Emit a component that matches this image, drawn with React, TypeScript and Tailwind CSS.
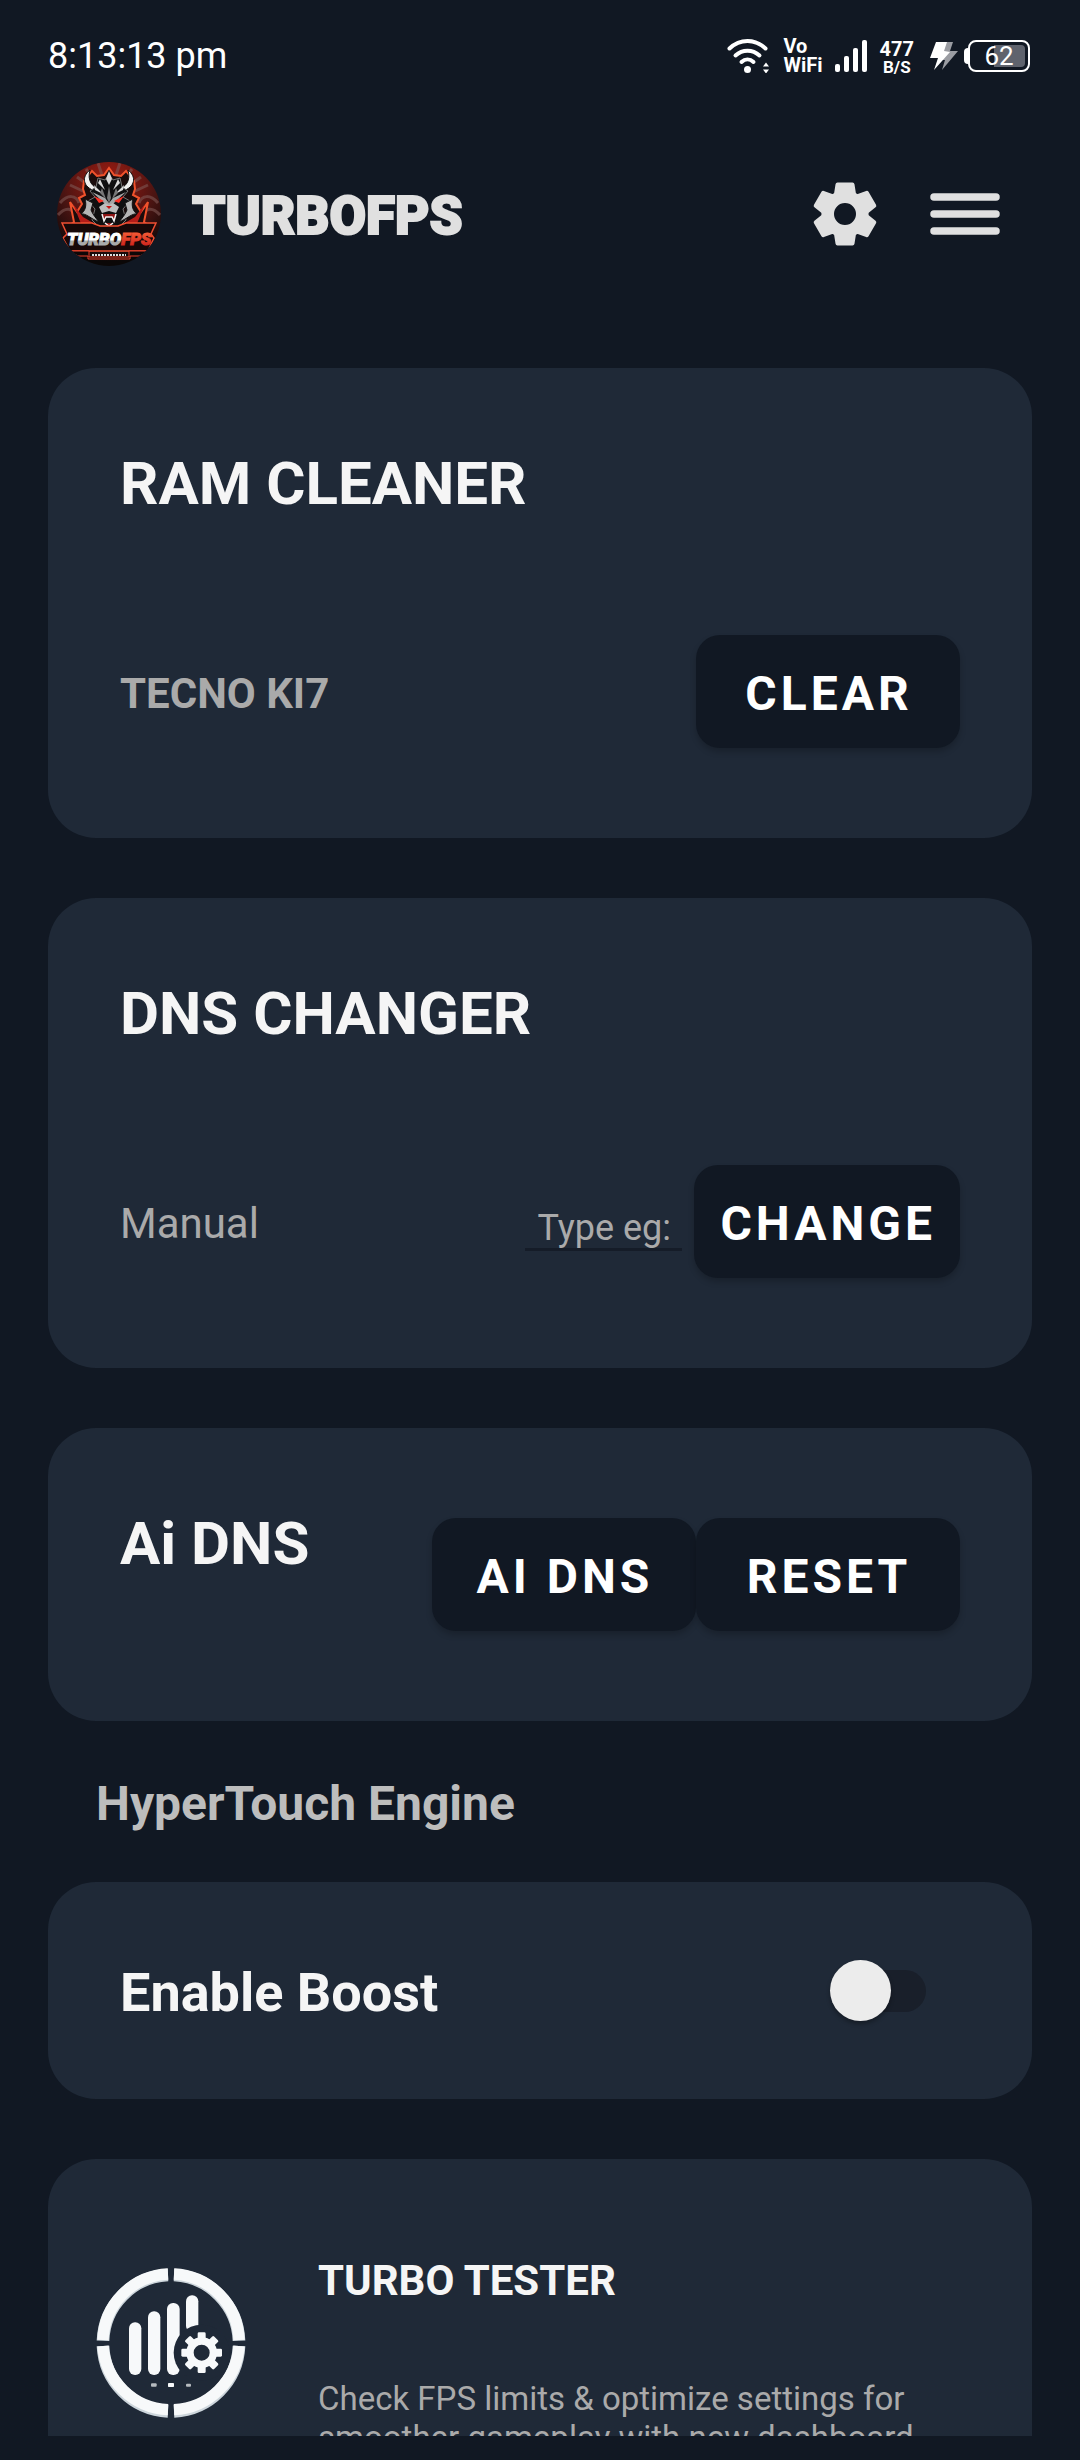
import { useState } from "react";
import type { ReactNode } from "react";

const gearTeeth = [0, 60, 120, 180, 240, 300];
const smallGearTeeth = [0, 45, 90, 135, 180, 225, 270, 315];

function WifiIcon() {
  return (
    <svg viewBox="0 0 43 34" className="h-[34px] w-[43px]" fill="none" stroke="#fff" strokeWidth="4" strokeLinecap="round">
      <path d="M2.500 9.500C13-.500 28-.500 38.500 9.500" />
      <path d="M8.500 16.500c7-6.500 17-6.500 24 0" />
      <path d="M14.500 23c3.500-3.200 8.500-3.200 12 0" />
      <circle cx="20.500" cy="30.500" r="3.500" fill="#fff" stroke="none" />
      <path d="M36 27.500l3-4 3 4zM36 30.500l3 4 3-4z" fill="#fff" stroke="none" />
    </svg>
  );
}

function SignalIcon() {
  return (
    <svg viewBox="0 0 33 33" className="h-[33px] w-[33px]" fill="#fff">
      <rect x="0" y="24" width="5" height="8" rx="2" />
      <rect x="9" y="16" width="5" height="16" rx="2" />
      <rect x="18" y="8" width="5" height="24" rx="2" />
      <rect x="27" y="0" width="5" height="32" rx="2" />
    </svg>
  );
}

function BoltIcon() {
  return (
    <svg viewBox="0 0 28 29" className="h-[29px] w-[28px]">
      <path d="M12 0h11l-3 9h8L12 28l3-10h-7z" fill="#9a9ca2" />
      <path d="M6 0h11l-3 9 6 1L4 28l4-12H0z" fill="#fff" />
    </svg>
  );
}

function StatusBar() {
  return (
    <div className="flex h-28 shrink-0 items-center justify-between pr-[50px] pl-12 text-white">
      <span className="text-[36px] leading-[42px]">8:13:13 pm</span>
      <div className="flex items-center">
        <WifiIcon />
        <div className="ml-[14px] text-[20px] leading-[19px] font-bold">
          <div>Vo</div>
          <div>WiFi</div>
        </div>
        <div className="ml-3">
          <SignalIcon />
        </div>
        <div className="ml-3 pt-1 text-center font-bold">
          <div className="text-[20px] leading-[19px]">477</div>
          <div className="text-[17px] leading-[17px]">B/S</div>
        </div>
        <div className="ml-4">
          <BoltIcon />
        </div>
        <div className="ml-[6px] flex items-center">
          <div className="h-4 w-1 rounded-l bg-white" />
          <div className="flex h-8 w-[62px] items-center rounded-lg border-2 border-white p-[3px]">
            <div className="h-full w-full rounded bg-linear-to-r from-transparent from-40% to-[#5f636d] to-40% text-center text-[26px] leading-[22px]">
              62
            </div>
          </div>
        </div>
      </div>
    </div>
  );
}

function Logo() {
  return (
    <svg viewBox="0 0 106 106" className="h-[106px] w-[106px]" role="img" aria-label="TurboFPS logo">
      <defs>
        <radialGradient id="logoBg" cx="50%" cy="20%" r="75%">
          <stop offset="0" stopColor="#a51c12" />
          <stop offset="0.600" stopColor="#4a1513" />
          <stop offset="1" stopColor="#0b0707" />
        </radialGradient>
        <linearGradient id="logoWhite" x1="0" y1="0" x2="0" y2="1">
          <stop offset="0.550" stopColor="#fff" />
          <stop offset="0.600" stopColor="#a9aaaa" />
        </linearGradient>
        <linearGradient id="logoRed" x1="0" y1="0" x2="0" y2="1">
          <stop offset="0" stopColor="#ff6a3c" />
          <stop offset="1" stopColor="#c51616" />
        </linearGradient>
        <clipPath id="logoClip">
          <circle cx="53" cy="53" r="52" />
        </clipPath>
      </defs>
      <g clipPath="url(#logoClip)">
        <rect width="106" height="106" fill="url(#logoBg)" />
        <g fill="none" stroke="#7d5553" strokeWidth="3" opacity="0.600">
          <path d="M21 16l14 10M14 24l15 7M30 8l9 12M42 2l4 12M85 16L71 26M92 24l-15 7M76 8l-9 12M64 2l-4 12" />
          <path d="M4 42c8-9 16-8 19 0M2 54c8-9 15-7 18 2M102 42c-8-9-16-8-19 0M104 54c-8-9-15-7-18 2" />
        </g>
        <path
          d="M53 7l5 7 7 1 5-5 8 10 1 8-2 6 6 3-3 6 5 8 7-10-4 20 4 3-9 4H23l-9-4 4-3-4-20 7 10 5-8-3-6 6-3-2-6 1-8 8-10 5 5 7-1z"
          fill="#1a0c0c"
          stroke="#f0522c"
          strokeWidth="2"
        />
        <path d="M17 43l10 13 12 7-13 2zM89 43L79 56l-12 7 13 2z" fill="#b51c18" />
        <path d="M34 9c-9 7-7 17 5 21l6-1c-9-3-14-9-11-20zM72 9c9 7 7 17-5 21l-6-1c9-3 14-9 11-20z" fill="#f0f0f0" stroke="#111" />
        <path d="M53 13l4 6 7-2 2 9 6 4-5 6 7 4-7 8 3 11-10 10-7 6-7-6-10-10 3-11-7-8 7-4-5-6 6-4 2-9 7 2z" fill="#0f0f10" stroke="#777" />
        <g fill="#d9d9d9">
          <path d="M53 10l3 8-3 6-3-6z" />
          <path d="M44 18l5 11-7-7zM62 18l-5 11 7-7zM38 24l9 9-8-4zM68 24l-9 9 8-4z" />
        </g>
        <path d="M53 25l2 12-2 5-2-5zM46 27l4 11-6-6zM60 27l-4 11 6-6z" fill="#777" />
        <path d="M36 31l13 6 4 5 4-5 13-6-10 9-4 4h-6l-4-4z" fill="#a6a6a6" />
        <path d="M29 38l8 4-2 7c2 5 5 8 8 12-8-3-13-9-18-8 4-3 6-8 4-15zM77 38l-8 4 2 7c-2 5-5 8-8 12 8-3 13-9 18-8-4-3-6-8-4-15z" fill="#b5b5b5" stroke="#111" />
        <path d="M38 35l10 5-5 2zM68 35l-10 5 5 2z" fill="#ff3024" />
        <path d="M43 46l6-4 4 2 4-2 6 4-3 6-7-2-7 2z" fill="#bdbdbd" />
        <path d="M50 45h6l-3 3z" fill="#c51616" />
        <path d="M46 53l2 7 2-4h6l2 4 2-7M49 62l4 3 4-3" fill="#8d1414" stroke="#f4f4f4" strokeWidth="1.500" />
        <path d="M6 62h30l8 3h18l8-3h30l-5 11 3 4-6 13H14L7 77l4-4z" fill="#170808" stroke="#ef4f32" strokeWidth="1.500" />
        <text x="11" y="84" fontFamily="Roboto, sans-serif" fontSize="17" fontWeight="900" fontStyle="italic" strokeWidth="1">
          <tspan fill="url(#logoWhite)" stroke="url(#logoWhite)">TURBO</tspan>
          <tspan fill="url(#logoRed)" stroke="url(#logoRed)">FPS</tspan>
        </text>
        <path d="M14 90h19v6h40v-6h19l-8 5h-10v3H32v-3H22z" fill="#0d0707" stroke="#e8402c" />
        <path d="M36 94h34" stroke="#ddd" strokeWidth="2" strokeDasharray="2 1" />
      </g>
    </svg>
  );
}

function GearIcon() {
  return (
    <svg viewBox="-32 -32 64 64" className="h-16 w-16" fill="#e0e0e0">
      <circle r="17.250" fill="none" stroke="#e0e0e0" strokeWidth="12.500" />
      {gearTeeth.map((angle) => (
        <path
          key={angle}
          d="M-7.500-29.500h15l1.500 9.500 2 3h-22l2-3z"
          stroke="#e0e0e0"
          strokeWidth="4"
          strokeLinejoin="round"
          transform={`rotate(${angle})`}
        />
      ))}
    </svg>
  );
}

function MenuIcon() {
  return (
    <svg viewBox="0 0 70 44" className="h-11 w-[70px]" stroke="#e0e0e0" strokeWidth="7.500" strokeLinecap="round">
      <path d="M4 5h62M4 22h62M4 39h62" />
    </svg>
  );
}

function TesterIcon() {
  return (
    <svg viewBox="48 57 450 450" className="h-[150px] w-[150px] shrink-0" fill="#f7f9fa">
      <g fill="none" strokeWidth="38" strokeLinejoin="round">
        <g stroke="#cdd6dc">
          <path d="M264 78A205 205 0 0 0 69 275M282 78A205 205 0 0 1 477 275M264 487A205 205 0 0 1 69 291M282 487A205 205 0 0 0 477 291" />
        </g>
        <g stroke="#f7f9fa" strokeWidth="34">
          <path d="M264 75A205 205 0 0 0 69 273M282 75A205 205 0 0 1 477 273M264 482A205 205 0 0 1 69 291M282 482A205 205 0 0 0 477 291" />
        </g>
      </g>
      <rect x="147" y="220" width="37" height="158" rx="18" />
      <rect x="204" y="187" width="37" height="191" rx="18" />
      <rect x="261" y="162" width="38" height="216" rx="18" />
      <rect x="318" y="139" width="37" height="110" rx="18" />
      <circle cx="365" cy="311" r="84" fill="#1f2937" />
      <g transform="translate(365 311)">
        <circle r="35" fill="none" stroke="#f7f9fa" strokeWidth="22" />
        {smallGearTeeth.map((angle) => (
          <rect key={angle} x="-12" y="-61" width="24" height="22" rx="4" transform={`rotate(${angle})`} />
        ))}
      </g>
      <rect x="213" y="403" width="17" height="10" rx="3" opacity="0.700" />
      <rect x="264" y="402" width="18" height="12" rx="2" />
      <rect x="318" y="404" width="15" height="9" rx="3" opacity="0.700" />
    </svg>
  );
}

function CardTitle({ children }: { children: ReactNode }) {
  return <h2 className="text-[60px] leading-[72px] font-bold text-[#f5f5f5]">{children}</h2>;
}

function CardButton({ children }: { children: ReactNode }) {
  return (
    <button
      type="button"
      className="h-[113px] min-w-[264px] rounded-3xl bg-[#111823] pt-1 pr-6 pl-[26px] text-[48px] leading-[56px] font-bold tracking-[4px] text-white shadow-[0_4px_6px_rgba(0,0,0,0.2)]"
    >
      {children}
    </button>
  );
}

export default function App() {
  const [dns, setDns] = useState("");
  const [boost, setBoost] = useState(false);

  return (
    <div className="flex h-screen flex-col bg-[#111823] font-[Roboto,sans-serif]">
      <StatusBar />

      <header className="flex h-[204px] shrink-0 items-center justify-between pr-20 pl-14">
        <div className="flex items-center gap-[30px]">
          <Logo />
          <h1 className="pt-1 text-[53px] leading-[62px] font-black text-[#e0e0e0] [-webkit-text-stroke:2px_#e0e0e0]">
            TURBOFPS
          </h1>
        </div>
        <div className="flex items-center gap-[53px]">
          <button type="button" aria-label="Settings">
            <GearIcon />
          </button>
          <button type="button" aria-label="Menu">
            <MenuIcon />
          </button>
        </div>
      </header>

      <main className="min-h-0 flex-1 overflow-y-auto px-12 pt-[52px] [scrollbar-width:none]">
        <section className="rounded-[48px] bg-[#1f2937] px-[72px] pt-20 pb-[90px]">
          <CardTitle>RAM CLEANER</CardTitle>
          <div className="mt-[115px] flex items-center justify-between">
            <p className="pt-1 text-[42px] leading-[49px] font-bold text-[#aaaaaa]">TECNO KI7</p>
            <CardButton>CLEAR</CardButton>
          </div>
        </section>

        <section className="mt-[60px] rounded-[48px] bg-[#1f2937] px-[72px] pt-20 pb-[90px]">
          <CardTitle>DNS CHANGER</CardTitle>
          <div className="mt-[115px] flex items-center">
            <label htmlFor="dns" className="flex-1 pt-1 text-[42px] leading-[49px] text-[#aaaaaa]">
              Manual
            </label>
            <input
              id="dns"
              value={dns}
              onChange={(e) => setDns(e.target.value)}
              placeholder="Type eg:"
              className="mr-3 h-[58px] w-[157px] border-b-[3px] border-[#151c28] px-3 pt-4 text-[36px] leading-[42px] text-white outline-none placeholder:text-[#aaaaaa]"
            />
            <CardButton>CHANGE</CardButton>
          </div>
        </section>

        <section className="mt-[60px] flex items-start justify-between rounded-[48px] bg-[#1f2937] px-[72px] pt-20 pb-[90px]">
          <CardTitle>Ai DNS</CardTitle>
          <div className="flex pt-[10px]">
            <CardButton>AI DNS</CardButton>
            <CardButton>RESET</CardButton>
          </div>
        </section>

        <h2 className="mt-[55px] mb-[50px] px-12 text-[48px] leading-[56px] font-bold text-[#bdbdbd]">HyperTouch Engine</h2>

        <section className="flex items-center justify-between rounded-[48px] bg-[#1f2937] py-[74px] pr-[106px] pl-[72px]">
          <label htmlFor="boost" className="pt-1 text-[54px] leading-[65px] font-bold text-[#f5f5f5]">
            Enable Boost
          </label>
          <input
            id="boost"
            type="checkbox"
            role="switch"
            checked={boost}
            onChange={(e) => setBoost(e.target.checked)}
            className="relative h-[42px] w-24 appearance-none rounded-full bg-[#191f2a] before:absolute before:-top-[10px] before:left-0 before:h-[61px] before:w-[61px] before:rounded-full before:bg-[#ececec] before:shadow-[0_3px_4px_rgba(0,0,0,0.3)] checked:before:left-9"
          />
        </section>

        <section className="mt-[60px] flex items-start gap-[72px] rounded-[48px] bg-[#1f2937] pt-[97px] pr-[72px] pb-[72px] pl-12">
          <div className="pt-3">
            <TesterIcon />
          </div>
          <div>
            <h3 className="text-[42px] leading-[49px] font-bold text-[#f5f5f5]">TURBO TESTER</h3>
            <p className="mt-[74px] text-[33px] leading-[39px] text-[#aaaaaa]">
              Check FPS limits & optimize settings for smoother gameplay with new dashboard
            </p>
          </div>
        </section>
      </main>

      <div className="h-6 shrink-0" />
    </div>
  );
}
